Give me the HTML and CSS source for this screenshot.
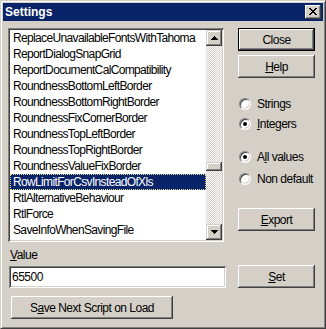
FILE: index.html
```html
<!DOCTYPE html>
<html lang="en">
  <head>
    <meta charset="UTF-8" />
    <title>Settings</title>
    <link rel="stylesheet" href="styles.css">
  </head>
  <body>
    <div class="window">
      <div class="titlebar">
        <span class="title">Settings</span>
        <span class="title-close">
          <svg width="8" height="7" viewBox="0 0 8 7"><path d="M0 0h2v1H0zM6 0h2v1H6zM1 1h2v1H1zM5 1h2v1H5zM2 2h4v1H2zM3 3h2v1H3zM2 4h4v1H2zM1 5h2v1H1zM5 5h2v1H5zM0 6h2v1H0zM6 6h2v1H6z" fill="#000"/></svg>
        </span>
      </div>

      <div class="dialog">
        <div class="listbox">
          <ul class="items">
            <li>ReplaceUnavailableFontsWithTahoma</li>
            <li>ReportDialogSnapGrid</li>
            <li>ReportDocumentCalCompatibility</li>
            <li>RoundnessBottomLeftBorder</li>
            <li>RoundnessBottomRightBorder</li>
            <li>RoundnessFixCornerBorder</li>
            <li>RoundnessTopLeftBorder</li>
            <li>RoundnessTopRightBorder</li>
            <li>RoundnessValueFixBorder</li>
            <li class="selected">RowLimitForCsvInsteadOfXls</li>
            <li>RtlAlternativeBehaviour</li>
            <li>RtlForce</li>
            <li>SaveInfoWhenSavingFile</li>
          </ul>
          <div class="scrollbar">
            <div class="sb-btn">
              <svg width="7" height="4" viewBox="0 0 7 4"><path d="M3 0h1v1H3zM2 1h3v1H2zM1 2h5v1H1zM0 3h7v1H0z" fill="#000"/></svg>
            </div>
            <div class="sb-track">
              <div class="sb-thumb"></div>
            </div>
            <div class="sb-btn">
              <svg width="7" height="4" viewBox="0 0 7 4"><path d="M0 0h7v1H0zM1 1h5v1H1zM2 2h3v1H2zM3 3h1v1H3z" fill="#000"/></svg>
            </div>
          </div>
        </div>

        <div class="side">
          <button class="btn default">Close</button>
          <button class="btn help"><u>H</u>elp</button>

          <div class="radio-group first">
            <div class="radio-row"><span class="radio"></span>Strings</div>
            <div class="radio-row"><span class="radio checked"></span><u>I</u>ntegers</div>
          </div>
          <div class="radio-group second">
            <div class="radio-row"><span class="radio checked"></span>A<u>l</u>l values</div>
            <div class="radio-row"><span class="radio"></span>Non default</div>
          </div>

          <button class="btn export"><u>E</u>xport</button>
        </div>

        <div class="value-label"><u>V</u>alue</div>
        <div class="value-input">65500</div>
        <button class="btn set"><u>S</u>et</button>
        <button class="btn save">S<u>a</u>ve Next Script on Load</button>
      </div>
    </div>
  </body>
</html>
```

FILE: styles.css
```css
body {
  margin: 0;
  background: #d4d0c8;
  font-family: "Liberation Sans", Arial, sans-serif;
  font-size: 12px;
  letter-spacing: -0.5px;
  color: #000;
}
.window {
  box-sizing: border-box;
  width: 326px;
  height: 329px;
  padding: 2px;
  background: #d4d0c8;
  border: 1px solid;
  border-color: #d4d0c8 #404040 #404040 #d4d0c8;
  box-shadow: inset 1px 1px #fff, inset -1px -1px #808080;
}
.titlebar {
  display: flex;
  align-items: center;
  justify-content: space-between;
  height: 18px;
  padding: 0 2px 0 2px;
  background: #0a246a;
}
.title {
  color: #fff;
  font-weight: bold;
  letter-spacing: 0;
  font-size: 12px;
}
.title-close {
  display: flex;
  align-items: center;
  justify-content: center;
  width: 16px;
  height: 14px;
  background: #d4d0c8;
  box-shadow: inset -1px -1px #404040, inset 1px 1px #fff, inset -2px -2px #808080;
}
.title-close svg {
  display: block;
  margin: 0 1px 1px 0;
}

.dialog {
  display: grid;
  grid-template-columns: 216px 77px;
  column-gap: 14px;
  padding: 7px 0 0 5px;
}

/* list box */
.listbox {
  display: flex;
  box-sizing: border-box;
  height: 214px;
  padding: 2px;
  background: #fff;
  box-shadow: inset 1px 1px #808080, inset -1px -1px #fff, inset 2px 2px #404040, inset -2px -2px #d4d0c8;
  overflow: hidden;
}
.items {
  flex: 1;
  margin: 0;
  padding: 0;
  list-style: none;
  overflow: hidden;
  letter-spacing: -0.65px;
}
.items li {
  height: 16px;
  line-height: 16px;
  padding-left: 3px;
  white-space: nowrap;
}
.items li.selected {
  box-sizing: border-box;
  padding-left: 2px;
  line-height: 14px;
  background: #0a246a;
  color: #fff;
  border: 1px dotted #e6e08a;
}
.scrollbar {
  display: flex;
  flex-direction: column;
  width: 16px;
}
.sb-btn {
  display: flex;
  align-items: center;
  justify-content: center;
  height: 16px;
  background: #d4d0c8;
  box-shadow: inset -1px -1px #404040, inset 1px 1px #d4d0c8, inset -2px -2px #808080, inset 2px 2px #fff;
}
.sb-btn svg {
  display: block;
}
.sb-track {
  flex: 1;
  background-color: #fff;
  background-image: conic-gradient(#d4d0c8 25%, #fff 0 50%, #d4d0c8 0 75%, #fff 0);
  background-size: 2px 2px;
}
.sb-thumb {
  height: 9px;
  margin-top: 116px;
  background: #d4d0c8;
  box-shadow: inset -1px -1px #404040, inset 1px 1px #d4d0c8, inset -2px -2px #808080, inset 2px 2px #fff;
}

/* buttons */
.btn {
  display: block;
  box-sizing: border-box;
  height: 23px;
  padding: 0;
  border: none;
  background: #d4d0c8;
  font: inherit;
  letter-spacing: inherit;
  color: #000;
  box-shadow: inset -1px -1px #404040, inset 1px 1px #fff, inset -2px -2px #808080, inset 2px 2px #d4d0c8;
}
.btn.default {
  border: 1px solid #000;
  box-shadow: inset -1px -1px #404040, inset 1px 1px #fff, inset -2px -2px #808080;
}
.side {
  display: flex;
  flex-direction: column;
}
.side .btn {
  width: 77px;
}
.btn.help {
  margin-top: 4px;
}
.btn.export {
  margin-top: 19px;
}

/* radios */
.radio-group.first {
  margin-top: 16px;
}
.radio-group.second {
  margin-top: 13px;
}
.radio-group.second .radio-row + .radio-row {
  margin-top: 2px;
}
.radio-row {
  display: flex;
  align-items: center;
  height: 20px;
  padding-left: 1px;
}
.radio {
  position: relative;
  box-sizing: border-box;
  width: 12px;
  height: 12px;
  margin-right: 6px;
  border-radius: 50%;
  background: #fff;
  border: 1px solid;
  border-color: #808080 #fff #fff #808080;
  box-shadow: inset 1px 1px #404040, inset -1px -1px #d4d0c8;
}
.radio.checked::after {
  content: "";
  position: absolute;
  left: 3px;
  top: 3px;
  width: 4px;
  height: 4px;
  border-radius: 50%;
  background: #000;
}

/* value row */
.value-label {
  grid-column: 1;
  height: 14px;
  line-height: 14px;
  margin: 6px 0 0 2px;
}
.value-input {
  grid-column: 1;
  box-sizing: border-box;
  height: 22px;
  width: 217px;
  margin: 4px 0 0 1px;
  padding: 0 3px;
  line-height: 22px;
  background: #fff;
  box-shadow: inset 1px 1px #808080, inset -1px -1px #fff, inset 2px 2px #404040, inset -2px -2px #d4d0c8;
}
.btn.set {
  grid-column: 2;
  grid-row: 3;
  width: 77px;
  margin-top: 3px;
}
.btn.save {
  grid-column: 1;
  width: 162px;
  margin: 8px 0 0 3px;
}
```
